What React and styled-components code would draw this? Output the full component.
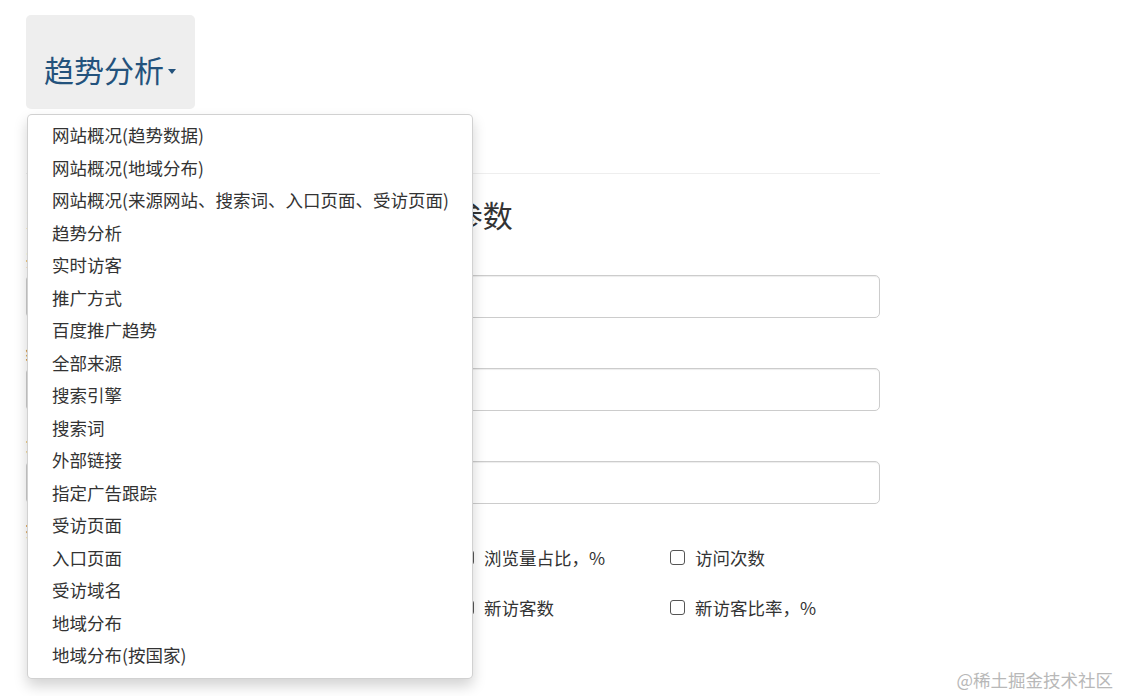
import React from 'react'
import styled, { createGlobalStyle } from 'styled-components'

const GlobalStyle = createGlobalStyle`
    html, body {
        margin: 0;
        padding: 0;
        background: #fff;
    }
    body {
        font-family: "Noto Sans CJK SC", "Liberation Sans", sans-serif;
        font-size: 17.5px;
        line-height: 25px;
        color: #333;
    }
    * {
        box-sizing: border-box;
    }
`;

const Page = styled.div`
    position: relative;
    width: 1121px;
    height: 696px;
    overflow: hidden;
`;

const Container = styled.div`
    width: 854px;
    margin-left: 26px;
    padding-top: 15px;
`;

const Nav = styled.ul`
    list-style: none;
    margin: 0;
    padding: 0;
    display: flex;
`;

const NavItem = styled.li`
    position: relative;
`;

const NavButton = styled.a`
    display: flex;
    align-items: center;
    width: 169px;
    height: 94px;
    padding: 14px 0 0 18px;
    background: #eee;
    border-radius: 5px;
    color: #23527c;
    font-size: 30px;
    line-height: 40px;
    text-decoration: none;
    cursor: pointer;
`;

const Caret = styled.span`
    display: inline-block;
    width: 0;
    height: 0;
    margin-left: 4px;
    margin-top: 4px;
    border-top: 5px solid #23527c;
    border-left: 4.5px solid transparent;
    border-right: 4.5px solid transparent;
`;

const Menu = styled.ul`
    position: absolute;
    top: 100%;
    left: 1px;
    z-index: 10;
    width: 446px;
    margin: 5px 0 0;
    padding: 3.5px 0 7px;
    list-style: none;
    background: #fff;
    border: 1px solid rgba(0, 0, 0, 0.18);
    border-radius: 5px;
    box-shadow: 0 7px 14px rgba(0, 0, 0, 0.175);
`;

const MenuItem = styled.li`
    padding: 3.75px 24px;
    line-height: 25px;
    font-size: 17.5px;
    color: #333;
    white-space: nowrap;
`;

const Divider = styled.hr`
    margin: 64px 0 0;
    border: 0;
    border-top: 1px solid #eee;
`;

const Title = styled.h3`
    margin: 22px 0 0;
    font-size: 30px;
    line-height: 36px;
    font-weight: 400;
    color: #333;
    white-space: nowrap;
`;

const FormGroup = styled.div`
    margin-top: ${p => p.gap}px;
`;

const Label = styled.label`
    display: block;
    height: 20px;
    margin-bottom: 5px;
    font-weight: 700;
    font-size: 17.5px;
    line-height: 20px;
`;

const Input = styled.input`
    display: block;
    width: 100%;
    height: 43px;
    padding: 7px 15px;
    border: 1px solid #ccc;
    border-radius: 5px;
    font-size: 17.5px;
    font-family: inherit;
    box-shadow: inset 0 1px 1px rgba(0, 0, 0, 0.075);
`;

const CheckGrid = styled.div`
    display: grid;
    grid-template-columns: repeat(4, 211px);
    row-gap: 25px;
`;

const CheckItem = styled.label`
    display: flex;
    align-items: center;
    gap: 10px;
    padding-left: 11px;
    height: 25px;
    font-size: 17.5px;
    color: #333;
    white-space: nowrap;
`;

const Box = styled.span`
    width: 15px;
    height: 15px;
    flex: none;
    border: 1.3px solid #555;
    border-radius: 3px;
    background: #fff;
`;

const Watermark = styled.div`
    position: absolute;
    right: 8px;
    bottom: 4px;
    font-size: 17.5px;
    line-height: 25px;
    color: #b8b8b8;
`;

const menuItems = [
    '网站概况(趋势数据)',
    '网站概况(地域分布)',
    '网站概况(来源网站、搜索词、入口页面、受访页面)',
    '趋势分析',
    '实时访客',
    '推广方式',
    '百度推广趋势',
    '全部来源',
    '搜索引擎',
    '搜索词',
    '外部链接',
    '指定广告跟踪',
    '受访页面',
    '入口页面',
    '受访域名',
    '地域分布',
    '地域分布(按国家)',
];

const fields = ['开始日期 start_date', '结束日期 end_date', '站点 site_id'];

const metrics = [
    '浏览量(PV)', '访客数(UV)', '浏览量占比，%', '访问次数',
    'IP数', '跳出率，%', '新访客数', '新访客比率，%',
];

const App = () => {
    return (
        <Page>
            <GlobalStyle />
            <Container>
                <Nav>
                    <NavItem>
                        <NavButton>趋势分析<Caret /></NavButton>
                        <Menu>
                            {menuItems.map((item) => (
                                <MenuItem key={item}>{item}</MenuItem>
                            ))}
                        </Menu>
                    </NavItem>
                </Nav>
                <Divider />
                <Title>趋势分析 trend/time/a接口请求参数</Title>
                {fields.map((f, i) => (
                    <FormGroup key={f} gap={i === 0 ? 18 : 25}>
                        <Label>{f}</Label>
                        <Input type="text" />
                    </FormGroup>
                ))}
                <FormGroup gap={16}>
                    <Label>指标 metrics</Label>
                    <CheckGrid>
                        {metrics.map((m) => (
                            <CheckItem key={m}>
                                <Box />
                                {m}
                            </CheckItem>
                        ))}
                    </CheckGrid>
                </FormGroup>
            </Container>
            <Watermark>@稀土掘金技术社区</Watermark>
        </Page>
    )
}

export default App
